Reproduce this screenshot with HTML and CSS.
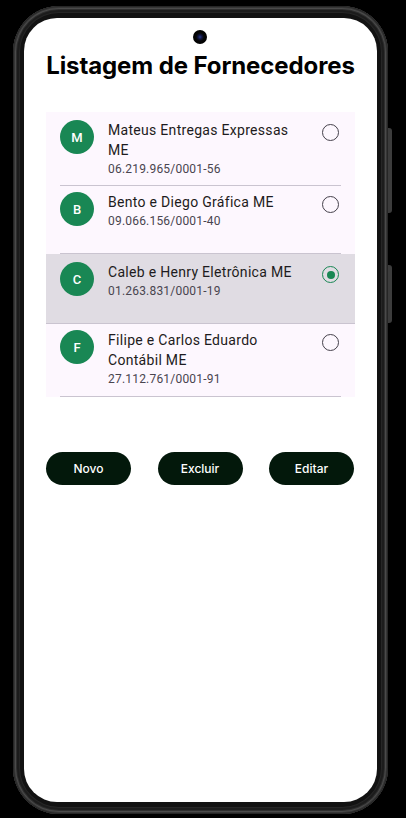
FILE: index.html
```html
<!DOCTYPE html>
<html lang="pt-BR">
<head>
<meta charset="utf-8">
<title>Listagem de Fornecedores</title>
<link rel="stylesheet" href="styles.css">
</head>
<body>
<div class="phone">
  <span class="side-btn side-btn-1"></span>
  <span class="side-btn side-btn-2"></span>
  <div class="screen">
    <span class="camera"></span>
    <h1 class="title">Listagem de Fornecedores</h1>
    <ul class="list">
      <li class="item item-first">
        <span class="avatar">M</span>
        <div class="texts">
          <div class="name">Mateus Entregas Expressas ME</div>
          <div class="doc">06.219.965/0001-56</div>
        </div>
        <span class="radio"></span>
      </li>
      <li class="item item-2l">
        <span class="avatar">B</span>
        <div class="texts">
          <div class="name">Bento e Diego Gráfica ME</div>
          <div class="doc">09.066.156/0001-40</div>
        </div>
        <span class="radio"></span>
      </li>
      <li class="item item-sel selected">
        <span class="avatar">C</span>
        <div class="texts">
          <div class="name">Caleb e Henry Eletrônica ME</div>
          <div class="doc">01.263.831/0001-19</div>
        </div>
        <span class="radio checked"></span>
      </li>
      <li class="item item-3l">
        <span class="avatar">F</span>
        <div class="texts">
          <div class="name">Filipe e Carlos Eduardo Contábil ME</div>
          <div class="doc">27.112.761/0001-91</div>
        </div>
        <span class="radio"></span>
      </li>
    </ul>
    <div class="actions">
      <button class="btn">Novo</button>
      <button class="btn">Excluir</button>
      <button class="btn">Editar</button>
    </div>
  </div>
</div>
</body>
</html>
```
FILE: styles.css
```css
html, body {
  margin: 0;
  padding: 0;
  background: #000;
  width: 406px;
  height: 818px;
  overflow: hidden;
}

.phone {
  position: relative;
  box-sizing: border-box;
  margin: 6px 0 0 13px;
  width: 375px;
  height: 808px;
  border-radius: 46px;
  padding: 12px 11px 12px 11px;
  background: #121212;
  box-shadow:
    inset 0 0 0 1px #262626,
    inset 0 0 0 2px #363636,
    inset 0 0 0 3px #4a4a4a,
    inset 0 0 0 4px #2e2e2e,
    inset 0 0 0 6px #1c1c1c,
    inset 0 0 0 7px #262626;
}

.side-btn {
  position: absolute;
  right: -4px;
  width: 4px;
  background: #3c3c3c;
  border-radius: 0 3px 3px 0;
}
.side-btn-1 { top: 122px; height: 85px; }
.side-btn-2 { top: 259px; height: 58px; }

.screen {
  position: relative;
  box-sizing: border-box;
  width: 100%;
  height: 100%;
  background: #fff;
  border-radius: 33px;
  padding: 0 22px;
  display: flex;
  flex-direction: column;
  overflow: hidden;
}

.camera {
  position: absolute;
  top: 12px;
  left: 169px;
  width: 14px;
  height: 14px;
  border-radius: 50%;
  background: radial-gradient(circle, #2a3a8a 0, #101540 2px, #050505 4px, #000 7px);
}

.title {
  margin: 33px 0 0;
  font-family: Inter, "Liberation Sans", sans-serif;
  font-weight: 700;
  font-size: 24px;
  line-height: 30px;
  color: #000;
  text-align: center;
  letter-spacing: -0.1px;
}

.list {
  list-style: none;
  margin: 31px 0 0;
  padding: 0;
  background: #fdf7fe;
}

.item {
  box-sizing: border-box;
  display: flex;
  align-items: flex-start;
  padding: 8px 14px 0 14px;
  position: relative;
}
.item::after {
  content: "";
  position: absolute;
  left: 14px;
  right: 14px;
  bottom: 0;
  height: 1px;
  background: #cac4d0;
}
.item-first { min-height: 74px; }
.item-2l { min-height: 68px; padding-top: 6px; }
.item-sel { min-height: 70px; }
.item-3l { min-height: 73px; padding-top: 6px; }

.item.selected {
  background: #e0dce3;
}
.item.selected::after { left: 0; right: 0; }

.avatar {
  flex: none;
  width: 34px;
  height: 34px;
  border-radius: 50%;
  background: #198754;
  color: #fff;
  font-family: Roboto, "Liberation Sans", sans-serif;
  font-weight: 500;
  font-size: 13px;
  display: flex;
  align-items: center;
  justify-content: center;
}

.texts {
  flex: 1;
  margin-left: 14px;
  font-family: Roboto, "Liberation Sans", sans-serif;
}
.name {
  font-size: 14px;
  line-height: 20px;
  letter-spacing: 0.3px;
  color: #1d1b20;
  padding-right: 20px;
}
.doc {
  font-size: 12px;
  line-height: 16px;
  letter-spacing: 0.2px;
  color: #49454f;
  margin-top: 1px;
}

.radio {
  flex: none;
  box-sizing: border-box;
  width: 17px;
  height: 17px;
  border-radius: 50%;
  border: 1.4px solid #45414b;
  margin-top: 4px;
  margin-right: 2px;
  position: relative;
}
.radio.checked {
  border-color: #198754;
}
.radio.checked::before {
  content: "";
  position: absolute;
  left: 50%;
  top: 50%;
  width: 8px;
  height: 8px;
  margin: -4px 0 0 -4px;
  border-radius: 50%;
  background: #198754;
}

.actions {
  display: flex;
  justify-content: space-between;
  margin-top: 55px;
  padding-right: 1px;
}
.btn {
  width: 85px;
  height: 33px;
  border: 0;
  border-radius: 17px;
  background: #03180b;
  color: #fff;
  font-family: Inter, Roboto, "Liberation Sans", sans-serif;
  font-weight: 500;
  font-size: 12px;
  padding: 0;
}
```
